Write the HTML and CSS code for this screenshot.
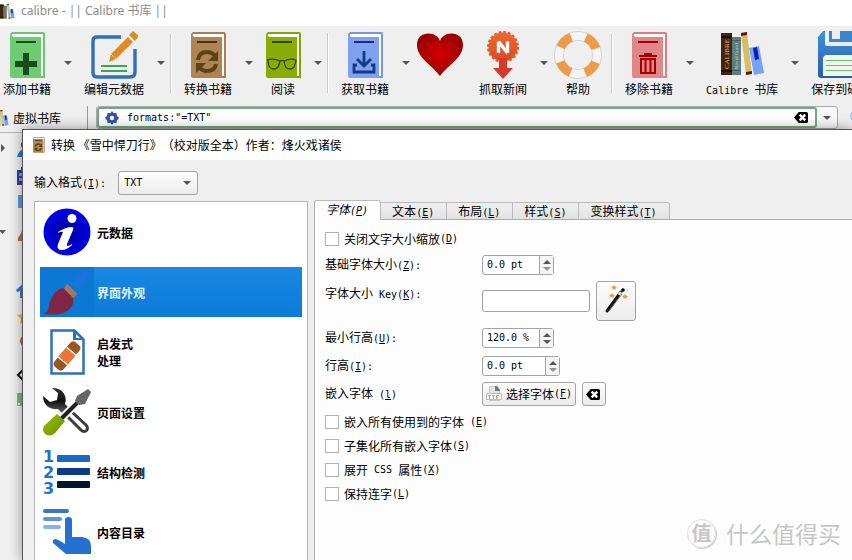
FILE: index.html
```html
<!DOCTYPE html>
<html lang="zh-CN">
<head>
<meta charset="utf-8">
<title>calibre - || Calibre 书库 ||</title>
<link rel="stylesheet" href="styles.css">
</head>
<body>
<svg class="defs" aria-hidden="true">
  <defs>
    <linearGradient id="g-news" x1="0" y1="0" x2="0" y2="1"><stop offset="0" stop-color="#ee6a2c"/><stop offset="1" stop-color="#d94a2b"/></linearGradient>
    <radialGradient id="g-heart" cx=".5" cy=".5" r=".6"><stop offset="0" stop-color="#d40000"/><stop offset="1" stop-color="#930000"/></radialGradient>
    <linearGradient id="g-disk" x1="0" y1="0" x2="0" y2="1"><stop offset="0" stop-color="#3f93dc"/><stop offset="1" stop-color="#2a5caa"/></linearGradient>
    <radialGradient id="g-info"><stop offset="0" stop-color="#00009a"/><stop offset="1" stop-color="#0000e6"/></radialGradient>
    <linearGradient id="g-metal" x1="0" y1="0" x2="0" y2="1"><stop offset="0" stop-color="#333"/><stop offset=".5" stop-color="#111"/><stop offset="1" stop-color="#666"/></linearGradient>
    <linearGradient id="g-grip" x1="0" y1="0" x2="1" y2="1"><stop offset="0" stop-color="#a4c400"/><stop offset="1" stop-color="#5f8a00"/></linearGradient>
    <symbol id="i-shelf" viewBox="0 0 44 44">
      <path fill="#46230f" d="M0 1h11v42H0z"/><path fill="#1d0d05" d="M0 4h11v2H0zM0 38h11v2H0z"/>
      <path fill="#5d7f7c" d="M11 5h9v38h-9z"/><path fill="#42605d" d="M11 8h9v1h-9zM11 38h9v1h-9z"/>
      <path fill="#d9bd66" d="m20 1 6-1 5 42-6 1z"/><path fill="#5a1a12" d="m20 1 6-1v3l-6 1zM25 40l6-1v3l-6 1z"/>
      <path fill="#74a3fb" d="m28 16 10-2 5 27-10 2z"/><path fill="#0c1fb0" d="m32 16 4-1 2 12-4 1z"/>
    </symbol>
    <symbol id="i-clear" viewBox="0 0 16 14"><path d="M5 1h8q2 0 2 2v8q0 2-2 2H5L0 7z"/><path d="m6 4 6 6m0-6-6 6" stroke="#fff" stroke-width="2.6"/></symbol>
    <symbol id="i-down" viewBox="0 0 8 4"><path fill="#555" d="M0 0h8L4 4z"/></symbol>
    <symbol id="i-up" viewBox="0 0 8 4"><path fill="#555" d="M0 4h8L4 0z"/></symbol>
    <symbol id="i-convert" viewBox="0 0 48 48">
      <path fill="#a97f50" d="M9 1h31q2 0 2 2v44h-4V6H9Q7 6 7 3z"/><path fill="#fff" d="M9 3h31v42h-2V6H10Q8 5 9 3z"/><path fill="#ad8452" d="M7 4q1 2 3 2h28v41H9q-2 0-2-2z"/>
      <path fill="#4b3312" d="M13 10h20v2H13z"/>
      <path fill="none" stroke="#5b4219" stroke-width="4" d="M14 29q1-8 9-8 5 0 8 4M32 33q-1 7-9 7-5 0-8-4"/><path fill="#5b4219" d="M34 20v10H24zM12 42V32h10z"/>
    </symbol>
  </defs>
</svg>

<header class="titlebar">
  <svg class="title-icon" viewBox="0 0 44 44" aria-hidden="true"><use href="#i-shelf"/></svg>
  <h1>calibre - || Calibre 书库 ||</h1>
</header>

<div class="toolbar" role="toolbar" aria-label="主工具栏">
  <button class="tool" type="button">
    <svg viewBox="0 0 48 48"><path fill="#69c771" d="M9 1h31q2 0 2 2v44h-4V6H9Q7 6 7 3z"/><path fill="#fff" d="M9 3h31v42h-2V6H10Q8 5 9 3z"/><path fill="#6ecb74" d="M7 4q1 2 3 2h28v41H9q-2 0-2-2z"/><path fill="#174d1a" d="M13 10h20v2H13zM20 22h6v8h8v6h-8v8h-6v-8h-8v-6h8z"/></svg>
    <span>添加书籍</span>
  </button>
  <button class="arrow" type="button" aria-label="添加书籍菜单"><svg viewBox="0 0 8 4"><use href="#i-down"/></svg></button>
  <button class="tool" type="button">
    <svg viewBox="0 0 48 48"><path fill="none" stroke="#2f6fc0" stroke-width="3.4" d="M31 6H7q-4 0-4 4v32q0 4 4 4h33q5 0 5-5V18"/><path fill="#e28a22" d="m21 23 17-17 5 5-17 17-7 3zM39 4l4-4 6 5-4 5z"/><path stroke="#fff" d="m38 4 7 7M21 23l5 5"/><path fill="#3da25a" d="M11 34h26v2H11zM11 39h26v2H11z"/></svg>
    <span>编辑元数据</span>
  </button>
  <button class="arrow" type="button" aria-label="编辑元数据菜单"><svg viewBox="0 0 8 4"><use href="#i-down"/></svg></button>
  <span class="sep"></span>
  <button class="tool" type="button"><svg viewBox="0 0 48 48"><use href="#i-convert"/></svg><span>转换书籍</span></button>
  <button class="arrow" type="button" aria-label="转换书籍菜单"><svg viewBox="0 0 8 4"><use href="#i-down"/></svg></button>
  <button class="tool slim" type="button">
    <svg viewBox="0 0 48 48"><path fill="#80a800" d="M9 1h31q2 0 2 2v44h-4V6H9Q7 6 7 3z"/><path fill="#fff" d="M9 3h31v42h-2V6H10Q8 5 9 3z"/><path fill="#8aac00" d="M7 4q1 2 3 2h28v41H9q-2 0-2-2z"/><path fill="#314200" d="M13 10h20v2H13z"/><path fill="none" stroke="#314200" stroke-width="1.3" d="M8 29q6-2 13 1 2-1 4 0 7-3 12-1M9 29c0 7 2 9 6 9s5-3 6-8M25 30c1 6 2 8 6 8s5-3 6-9"/></svg>
    <span>阅读</span>
  </button>
  <button class="arrow" type="button" aria-label="阅读菜单"><svg viewBox="0 0 8 4"><use href="#i-down"/></svg></button>
  <span class="sep"></span>
  <button class="tool" type="button">
    <svg viewBox="0 0 48 48"><path fill="#7896e0" d="M9 1h31q2 0 2 2v44h-4V6H9Q7 6 7 3z"/><path fill="#fff" d="M9 3h31v42h-2V6H10Q8 5 9 3z"/><path fill="#80a1ef" d="M7 4q1 2 3 2h28v41H9q-2 0-2-2z"/><path fill="#103477" d="M13 10h20v2H13z"/><path fill="none" stroke="#123a86" stroke-width="2.8" d="M23 20v14M16 28l7 7 7-7M16 34h-3v7h20v-7h-3"/></svg>
    <span>获取书籍</span>
  </button>
  <button class="arrow" type="button" aria-label="获取书籍菜单"><svg viewBox="0 0 8 4"><use href="#i-down"/></svg></button>
  <button class="tool slim donate" type="button" aria-label="捐助">
    <svg viewBox="0 0 48 48"><path fill="url(#g-heart)" d="M24 10C21 0 1-1 1 14c0 13 15 20 23 31 8-11 23-18 23-31C47-1 27 0 24 10z"/></svg>
  </button>
  <button class="tool" type="button">
    <svg viewBox="0 0 48 48"><circle cx="24" cy="16" r="14.500" fill="url(#g-news)"/><circle cx="24" cy="16" r="15" fill="none" stroke="#e65d2d" stroke-width="2" stroke-dasharray="2.800 1.900"/><path fill="#d43a2a" d="M20 27h8v10h6L24 48 14 37h6z"/><path fill="none" stroke="#fff" stroke-width="3.4" d="M19.500 22V10.500M28.500 22V10.500M19.500 10.500l9 11.500"/></svg>
    <span>抓取新闻</span>
  </button>
  <button class="arrow" type="button" aria-label="抓取新闻菜单"><svg viewBox="0 0 8 4"><use href="#i-down"/></svg></button>
  <button class="tool slim" type="button">
    <svg viewBox="0 0 48 48"><circle cx="24" cy="24" r="19" fill="none" stroke="#d4d4d4" stroke-width="10"/><circle cx="24" cy="24" r="19" fill="none" stroke="#f4f4f4" stroke-width="8"/><circle cx="24" cy="24" r="19" fill="none" stroke="#ef9a45" stroke-width="9" stroke-dasharray="15 14.845" stroke-dashoffset="-7.400"/></svg>
    <span>帮助</span>
  </button>
  <span class="sep wide"></span>
  <button class="tool" type="button">
    <svg viewBox="0 0 48 48"><path fill="#da7e80" d="M9 1h31q2 0 2 2v44h-4V6H9Q7 6 7 3z"/><path fill="#fff" d="M9 3h31v42h-2V6H10Q8 5 9 3z"/><path fill="#df8789" d="M7 4q1 2 3 2h28v41H9q-2 0-2-2z"/><path fill="#a80000" d="M13 10h20v2H13zM14 24h5v-2h8v2h5v2H14z"/><path fill="none" stroke="#a80000" stroke-width="2" d="M16 28v14h14V28zM20.500 29v12M25.500 29v12"/></svg>
    <span>移除书籍</span>
  </button>
  <button class="arrow" type="button" aria-label="移除书籍菜单"><svg viewBox="0 0 8 4"><use href="#i-down"/></svg></button>
  <button class="tool" type="button">
    <svg viewBox="0 0 48 48"><svg x="3" y="1" width="44" height="44" viewBox="0 0 44 44"><use href="#i-shelf"/></svg><text class="spine" transform="translate(11 38) rotate(-90)">CALIBRE</text><text class="spine small" transform="translate(20 38) rotate(-90)">Kovid Goyal</text></svg>
    <span><i>Calibre </i>书库</span>
  </button>
  <button class="arrow" type="button" aria-label="书库菜单"><svg viewBox="0 0 8 4"><use href="#i-down"/></svg></button>
  <button class="tool" type="button">
    <svg viewBox="0 0 48 48"><path fill="url(#g-disk)" d="M6 0h36l6 6v38q0 3-3 3H4q-3 0-3-3V6z"/><path fill="#eee" d="M8 0h31v13q0 2-2 2H10q-2 0-2-2z"/><path fill="#3a86cf" d="M12 0h23v11H12z"/><path fill="#eee" d="M15 0h8v8h-8z"/><path fill="#f2f5ee" d="M6 28q0-4 4-4h30q3 0 3 4v17H6z"/><path fill="#69bb6e" d="M9 29h31v1H9zM9 34h31v1H9zM9 39h31v1H9z"/></svg>
    <span>保存到磁盘</span>
  </button>
</div>

<div class="searchbar">
  <button class="library" type="button"><svg viewBox="0 0 44 44" aria-hidden="true"><use href="#i-shelf"/></svg>虚拟书库</button>
  <div class="search">
    <label class="field">
      <svg viewBox="0 0 16 16" aria-hidden="true"><path fill="#3552a8" d="m8 0 2 2.500 3-.5.500 3L16 8l-2.500 3-.5 3-3-.5L8 16l-2-2.500-3 .5-.5-3L0 8l2.500-3L3 2l3 .5z"/><circle cx="8" cy="8" r="2.600" fill="#fff"/></svg>
      <input type="text" value='formats:"=TXT"' aria-label="搜索">
      <button type="button" aria-label="清除搜索"><svg viewBox="0 0 16 14"><use href="#i-clear"/></svg></button>
    </label>
    <button class="history" type="button" aria-label="搜索历史"><svg viewBox="0 0 8 4"><use href="#i-down"/></svg></button>
  </div>
  <svg class="lens" viewBox="0 0 16 16" aria-hidden="true"><circle cx="7" cy="7" r="5" fill="none" stroke="#9cc3ea" stroke-width="2"/></svg>
</div>

<main class="workspace">
  <aside class="tree" aria-label="标签浏览器">
    <svg viewBox="0 0 34 300" aria-hidden="true">
      <path fill="#555" d="m1 11 4 4-4 4zM-1 97h7l-3.500 4z"/>
      <circle cx="26" cy="12" r="5" fill="#26405a"/><path fill="#1f7fd0" d="M17 24q2-8 8-8t8 8z"/>
      <path fill="#3a3aa8" d="M17 37h4v-3h3v3h9v15H17z"/><path fill="#8d8df0" d="M19 40h5v3h-5zM19 45h5v3h-5z"/>
      <path fill="#5a9be0" d="M18 62h14v13H18z"/>
      <path fill="#a9783f" d="m24 94 8 14H18q-1-3 2-6z"/>
      <path fill="#3e7bd0" d="m16 157 9-8 8 8-2 1v7H20v-7l-3 1z"/>
      <path fill="#f0b429" d="m25 176 2 5 6 1-4 4 1 5-5-3-5 3 1-5-4-4 6-1z"/>
      <circle cx="26" cy="208" r="6" fill="#d8552f"/>
      <path fill="none" stroke="#111" stroke-width="2" d="m24 236-6 6 6 6"/>
      <path fill="#6bbf77" d="M17 260h15v13H17z"/><path fill="#e8f6ea" d="M18 270h2v2h-2z"/>
    </svg>
  </aside>

  <section class="dialog" role="dialog" aria-labelledby="dlg-title">
    <header class="dialog-title">
      <svg viewBox="7 0 36 48" aria-hidden="true"><use href="#i-convert" width="48" height="48"/></svg>
      <h2 id="dlg-title">转换 《雪中悍刀行》（校对版全本）作者：烽火戏诸侯</h2>
    </header>
    <div class="dialog-body">
      <div class="format">
        <label for="fmt">输入格式<i>(<u>I</u>):</i></label>
        <span class="combo"><select id="fmt"><option>TXT</option></select><svg viewBox="0 0 8 4" aria-hidden="true"><use href="#i-down"/></svg></span>
      </div>
      <div class="columns">
        <nav class="sections" aria-label="转换设置">
          <button type="button">
            <svg viewBox="0 0 48 48"><circle cx="24" cy="24" r="23.500" fill="url(#g-info)"/><circle cx="29" cy="10.500" r="4.500" fill="#fff"/><path fill="#fff" d="M15 24q8-5 14-5 2 0 1 3l-6 14q-1 4 5 0 1 1-1 2-5 4-9 4-6 0-4-6l5-12q-2-1-5 1z"/></svg>
            <span>元数据</span>
          </button>
          <button type="button" class="selected" aria-current="true">
            <svg viewBox="0 0 48 48"><path fill="#1c72de" d="M27 16 39 5q5-4 6 0-1 8-11 17z"/><path fill="#a3785c" d="m24 16 10 10-4 4-9-9z"/><path fill="#7f2745" d="m20 20 10 10c1 11-9 18-29 15 8-3 4-8 8-15q3-7 11-10z"/></svg>
            <span>界面外观</span>
          </button>
          <button type="button">
            <svg viewBox="0 0 48 48"><path fill="#fff" stroke="#2e70c2" stroke-width="2.500" d="M8.500 2.500h23l9 9v34h-32z"/><path fill="#2e70c2" d="M30 1v11h11z"/><path fill="#fff" d="M33 6v4h4z"/><g transform="rotate(-50 24 28)"><rect x="8" y="22" width="32" height="12" rx="4" fill="#9a5724"/><path fill="#ee7437" d="M18 22h12v12H18z"/><path stroke="#fff" stroke-width="1.300" d="M17.500 22v12M30.500 22v12"/></g></svg>
            <span>启发式<br>处理</span>
          </button>
          <button type="button">
            <svg viewBox="0 0 48 48"><path fill="url(#g-metal)" d="M9 0c10-1 16 8 13 16l4 4-6 6-5-5C7 22 0 17 0 8l7 6 7-2 1-7z"/><path fill="none" stroke="#3d3d3d" stroke-width="3" stroke-linecap="round" d="m25 29 13 13c4 4 9-1 5-5L30 25"/><path stroke="#fff" stroke-width="8" d="M18 31 39 10"/><path stroke="#222" stroke-width="4" d="M18 31 39 10"/><path fill="#666" d="m34 8 11-7 3 3-6 12-6 1-4-4z"/><path fill="url(#g-grip)" d="m14 26 8 7-10 12c-6 6-15 0-11-7z"/></svg>
            <span>页面设置</span>
          </button>
          <button type="button">
            <svg viewBox="0 0 48 48"><text class="digit" x="0" y="14">1</text><text class="digit" x="0" y="30">2</text><text class="digit" x="0" y="46">3</text><rect x="14" y="7" width="33" height="7" rx="1" fill="#1b67c8"/><rect x="14" y="20" width="33" height="7" rx="1" fill="#0d3b86"/><rect x="14" y="33" width="33" height="7" rx="1" fill="#03142f"/></svg>
            <span>结构检测</span>
          </button>
          <button type="button">
            <svg viewBox="0 0 48 48"><rect y="1" width="26" height="4" rx="2" fill="#3b76c4"/><rect y="9" width="19" height="4" rx="2" fill="#5f94d8"/><rect y="17" width="18" height="4" rx="2" fill="#8ab4e6"/><path fill="#2470cf" d="M22 12q0-3 3.500-3t3.500 3v17h10q9 1 9 9v8H23L10 35q-1-4 3-4 5 2 9 5z"/></svg>
            <span>内容目录</span>
          </button>
        </nav>

        <div class="pages">
          <div class="tabs" role="tablist">
            <button type="button" role="tab" aria-selected="true">字体<i>(<u>P</u>)</i></button>
            <button type="button" role="tab" aria-selected="false">文本<i>(<u>E</u>)</i></button>
            <button type="button" role="tab" aria-selected="false">布局<i>(<u>L</u>)</i></button>
            <button type="button" role="tab" aria-selected="false">样式<i>(<u>S</u>)</i></button>
            <button type="button" role="tab" aria-selected="false">变换样式<i>(<u>T</u>)</i></button>
          </div>
          <form class="panel" role="tabpanel">
            <label class="check"><input type="checkbox">关闭文字大小缩放<i>(<u>D</u>)</i></label>
            <div class="row">
              <label for="base">基础字体大小<i>(<u>Z</u>):</i></label>
              <span class="spin"><input id="base" type="text" value="0.0 pt"><span class="steps"><button type="button" aria-label="增加"><svg viewBox="0 0 8 4"><use href="#i-up"/></svg></button><button type="button" aria-label="减少" disabled><svg viewBox="0 0 8 4"><use href="#i-down"/></svg></button></span></span>
            </div>
            <div class="row key">
              <label for="key">字体大小<i> Key(<u>K</u>):</i></label>
              <input id="key" class="text" type="text">
              <button class="wand" type="button" aria-label="字体大小向导"><svg viewBox="0 0 32 32"><path stroke="#111" stroke-width="3" stroke-linecap="round" d="M7 26 21 7"/><path stroke="#777" d="M9 26 22 9"/><path stroke="#ddd" stroke-width="3" d="m19 10 2-3"/><circle cx="23" cy="5" r="1.800"/><path fill="#e0a03a" d="m14 0 1 1.500 2 .5-1.500 1.500V5L14 4l-1.500 1V3.500L11 2l2-.5zM12 8l1 1.500 2 .5-1.500 1.500V13L12 12l-1.500 1v-1.500L9 10l2-.5zM25 9l1 1.500 2 .5-1.500 1.500V14L25 13l-1.500 1v-1.500L22 11l2-.5zM27 5h1v1h-1z"/></svg></button>
            </div>
            <div class="row">
              <label for="minh">最小行高<i>(<u>U</u>):</i></label>
              <span class="spin"><input id="minh" type="text" value="120.0 %"><span class="steps"><button type="button" aria-label="增加"><svg viewBox="0 0 8 4"><use href="#i-up"/></svg></button><button type="button" aria-label="减少"><svg viewBox="0 0 8 4"><use href="#i-down"/></svg></button></span></span>
            </div>
            <div class="row">
              <label for="lh">行高<i>(<u>I</u>):</i></label>
              <span class="spin broad"><input id="lh" type="text" value="0.0 pt"><span class="steps"><button type="button" aria-label="增加"><svg viewBox="0 0 8 4"><use href="#i-up"/></svg></button><button type="button" aria-label="减少" disabled><svg viewBox="0 0 8 4"><use href="#i-down"/></svg></button></span></span>
            </div>
            <div class="row">
              <label for="font">嵌入字体<i> (<u>l</u>)</i></label>
              <button id="font" class="push" type="button"><svg viewBox="0 0 16 16" aria-hidden="true"><path fill="#e4e4e4" stroke="#c4c4c4" d="M3.500.5h7l3 3v11h-10z"/><path fill="#777" d="M9 0h2l3 4v1H9z"/><path fill="#fafafa" stroke="#bbb" d="M.5 7.500h15v6H.5z"/><path fill="#ea9a4e" d="M2 9h3v1H4v3H3v-3H2zM6 9h3v1H8v3H7v-3H6zM10 9h3v1h-2v1h1v1h-1v1h-1z"/></svg>选择字体<i>(<u>F</u>)</i></button>
              <button class="push clear" type="button" aria-label="清除字体"><svg viewBox="0 0 16 14"><use href="#i-clear"/></svg></button>
            </div>
            <label class="check"><input type="checkbox">嵌入所有使用到的字体<i> (<u>E</u>)</i></label>
            <label class="check"><input type="checkbox">子集化所有嵌入字体<i>(<u>S</u>)</i></label>
            <label class="check"><input type="checkbox">展开<i> CSS </i>属性<i>(<u>X</u>)</i></label>
            <label class="check"><input type="checkbox">保持连字<i>(<u>L</u>)</i></label>
          </form>
        </div>
      </div>
    </div>
  </section>
</main>

<div class="watermark"><b>值</b><span>什么值得买</span></div>
</body>
</html>
```
FILE: styles.css
```css
* { box-sizing: border-box; }

body {
  margin: 0;
  height: 100vh;
  display: flex;
  flex-direction: column;
  position: relative;
  overflow: hidden;
  background: #efefef;
  color: #000;
  font: 12px/16px "Noto Sans CJK SC", sans-serif;
}

button, input, select {
  font: inherit;
  color: inherit;
  margin: 0;
  padding: 0;
  border: 0;
  background: none;
}

svg { display: block; flex: none; }
.defs { position: absolute; width: 0; height: 0; }
h1, h2 { margin: 0; font-weight: normal; }

/* half-width Latin runs set beside the Chinese labels */
i {
  font: 10px/16px "DejaVu Sans Mono", monospace;
  white-space: pre;
}
u { text-underline-offset: 1px; }

/* main window */
.titlebar {
  flex: none;
  display: flex;
  align-items: center;
  gap: 6px;
  height: 26px;
  padding-bottom: 4px;
  background: #fff;
  color: #8c8c8c;
}
.titlebar h1 { font: 12px/16px "Noto Sans", "Noto Sans CJK SC", sans-serif; }
.title-icon { width: 15px; height: 15px; }

.toolbar {
  flex: none;
  display: flex;
  height: 80px;
  padding-top: 5px;
}
.tool {
  flex: none;
  display: flex;
  flex-direction: column;
  align-items: center;
  gap: 2px;
  padding: 0 3px;
  min-width: 42px;
}
.tool > svg { width: 48px; height: 48px; }
.slim { width: 42px; }
.donate { margin-right: 15px; }
.tool span { white-space: nowrap; }
.arrow {
  flex: none;
  display: flex;
  align-items: center;
  justify-content: center;
  width: 27px;
  height: 64px;
}
.arrow svg, .history svg, .combo svg { width: 8px; height: 4px; }
.sep {
  flex: none;
  width: 2px;
  height: 60px;
  margin: 2px 9px 0 -4px;
  border-left: 1px solid #c9c9c9;
  border-right: 1px solid #fff;
}
.sep.wide { margin-left: 12px; }
.spine { font: 7px "Liberation Serif", serif; fill: #e0b060; }
.spine.small { font-size: 5px; fill: #c4d8d4; }

.searchbar {
  flex: none;
  display: flex;
  height: 27px;
  border-bottom: 1px solid #b4b4b4;
}
.library {
  flex: none;
  display: flex;
  align-items: center;
  gap: 4px;
  width: 88px;
  height: 23px;
  margin-right: 8px;
  border-right: 1px solid #999;
}
.library svg { width: 16px; height: 16px; margin-left: -7px; }
.search {
  flex: 1;
  display: flex;
  height: 23px;
  border: 1px solid #aaa;
  border-radius: 3px;
  background: #f8f8f8;
}
.field {
  flex: 1;
  display: flex;
  align-items: center;
  gap: 8px;
  padding: 0 6px;
  border: 2px solid #6fab7e;
  border-radius: 3px;
  background: #fff;
}
.field > svg { width: 14px; height: 14px; }
.field input {
  flex: 1;
  min-width: 0;
  font: 10px/16px "DejaVu Sans Mono", monospace;
  outline: none;
}
.field button svg { width: 15px; height: 13px; }
.history {
  display: flex;
  align-items: center;
  justify-content: center;
  width: 20px;
}
.lens { width: 14px; height: 16px; margin: 3px -11px 0 11px; }

/* tag tree behind the dialog */
.workspace { flex: 1; min-height: 0; position: relative; }
.tree svg { width: 34px; height: 300px; }

/* conversion dialog */
.dialog {
  position: absolute;
  inset: -4px 0 0 22px;
  display: flex;
  flex-direction: column;
  border-top: 1px solid #555;
  border-left: 1px solid #555;
  background: #efefef;
  box-shadow: 0 0 12px rgba(0, 0, 0, 0.4);
}
.dialog-title {
  flex: none;
  display: flex;
  align-items: center;
  gap: 6px;
  height: 30px;
  padding-left: 10px;
  background: #fff;
}
.dialog-title svg { width: 12px; height: 16px; }
.dialog-title h2 { font-size: 12px; white-space: pre; text-spacing-trim: space-all; }
.dialog-body {
  flex: 1;
  min-height: 0;
  display: flex;
  flex-direction: column;
  gap: 6px;
  padding: 11px 0 0 11px;
}
.format { display: flex; align-items: center; gap: 12px; }
.combo { display: flex; align-items: center; }
.combo select {
  appearance: none;
  width: 80px;
  height: 24px;
  padding-left: 5px;
  border: 1px solid #a3a3a3;
  border-radius: 3px;
  background: linear-gradient(#fdfdfd, #ececec);
  font: 10px/16px "DejaVu Sans Mono", monospace;
}
.combo svg { margin-left: -15px; pointer-events: none; }

.columns { flex: 1; min-height: 0; display: flex; gap: 6px; }
.sections {
  flex: none;
  width: 274px;
  padding: 0 5px;
  overflow: hidden;
  border: 1px solid #b4b4b4;
  border-bottom: 0;
  background: #fff;
}
.sections button {
  display: flex;
  align-items: center;
  width: 100%;
  height: 50px;
  margin: 5px 0 10px;
  font-weight: bold;
  line-height: 17px;
  text-align: left;
}
.sections svg { width: 54px; height: 48px; overflow: visible; }
.sections span { padding-left: 3px; }
.sections .selected { background: linear-gradient(#1b88e2, #0a7bd8); color: #e4f2ff; }
.selected svg { height: 50px; background: #0b78d4; }
.digit { font: bold 16px "DejaVu Sans", sans-serif; fill: #2470cf; }

.pages { flex: 1; min-width: 0; display: flex; flex-direction: column; }
.tabs { flex: none; display: flex; align-items: flex-end; height: 18px; }
.tabs button {
  flex: none;
  height: 17px;
  padding: 0 12px 0 11px;
  border: 1px solid #bbb;
  border-left: 0;
  border-bottom: 0;
  background: linear-gradient(#efefef, #e2e2e2);
}
.tabs button:last-child { border-top-right-radius: 3px; }
.tabs [aria-selected="true"] {
  position: relative;
  z-index: 1;
  height: 20px;
  margin-bottom: -1px;
  padding-bottom: 2px;
  border-left: 1px solid #aaa;
  border-radius: 3px 3px 0 0;
  background: #fdfdfd;
  font-style: italic;
}
[aria-selected="true"] i { font-style: italic; }

.panel {
  flex: 1;
  min-height: 0;
  display: flex;
  flex-direction: column;
  gap: 8px;
  padding: 11px 10px;
  border: 1px solid #aaa;
  border-right: 0;
  border-bottom: 0;
  background: #fdfdfd;
}
.check { display: flex; align-items: center; height: 16px; }
.row + .check { margin-top: 2px; }
.check input {
  appearance: none;
  width: 14px;
  height: 14px;
  margin-right: 5px;
  border: 1px solid #b4b4b4;
  background: #fff;
}
.row { display: flex; align-items: center; height: 20px; }
.row > label { flex: none; width: 157px; }
.row.key { height: 40px; margin: -2px 0 -1px; }
.key label { align-self: flex-start; padding-top: 4px; }
.text, .spin, .push, .wand {
  border: 1px solid #a3a3a3;
  border-radius: 3px;
  background: #fff;
}
.text { width: 108px; height: 22px; }
.wand { display: flex; align-items: center; justify-content: center; width: 40px; height: 40px; margin-left: 6px; }
.wand svg { width: 32px; height: 32px; }
.spin { display: flex; width: 72px; height: 20px; }
.spin.broad { width: 78px; }
.spin input {
  flex: 1;
  min-width: 0;
  padding-left: 4px;
  font: 10px/16px "DejaVu Sans Mono", monospace;
  outline: none;
}
.steps {
  display: flex;
  flex-direction: column;
  justify-content: center;
  gap: 3px;
  width: 14px;
  border-left: 1px solid #a3a3a3;
  background: #f4f4f4;
}
.steps button { display: flex; justify-content: center; }
.steps svg { width: 8px; height: 4px; }
.steps :disabled { opacity: 0.6; }
.push, .wand { background: linear-gradient(#fdfdfd, #ececec); }
.push {
  flex: none;
  display: flex;
  align-items: center;
  width: 94px;
  height: 24px;
  padding-left: 3px;
}
.push svg { width: 16px; height: 16px; margin-right: 4px; }
.push.clear { width: 24px; margin-left: 6px; }
.clear svg { width: 15px; height: 13px; margin: 0; }

.watermark {
  position: absolute;
  right: 11px;
  bottom: 10px;
  display: flex;
  align-items: center;
  gap: 10px;
  color: #c6c6c6;
  font-size: 23px;
  line-height: 34px;
}
.watermark b {
  width: 29px;
  height: 29px;
  border: 1px solid #ddd;
  border-radius: 50%;
  font-size: 20px;
  line-height: 26px;
  text-align: center;
  box-shadow: 1px 1px 0 #ccc;
}
```
